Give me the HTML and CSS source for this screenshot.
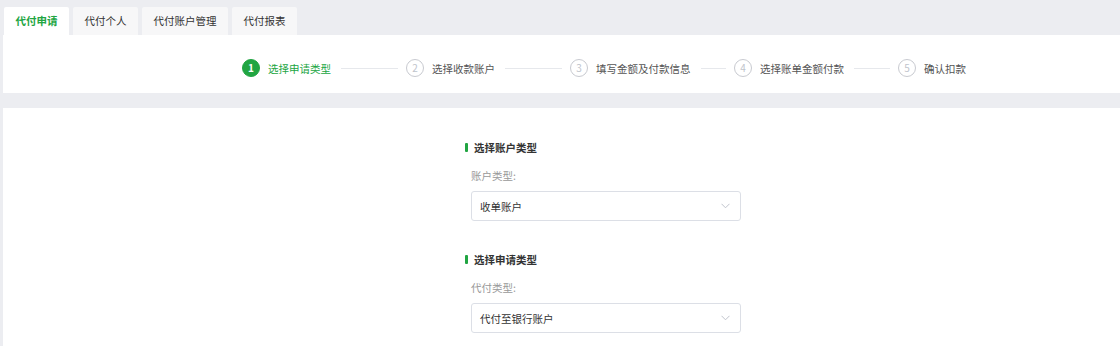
FILE: index.html
```html
<!DOCTYPE html>
<html lang="zh-CN">
<head>
<meta charset="utf-8">
<title>代付申请</title>
<link rel="stylesheet" href="styles.css">
</head>
<body>
<div class="tabs">
  <div class="tab active">代付申请</div>
  <div class="tab">代付个人</div>
  <div class="tab">代付账户管理</div>
  <div class="tab">代付报表</div>
</div>
<div class="panel steps-panel">
  <div class="steps">
    <div class="step done"><span class="num">1</span><span class="label">选择申请类型</span><span class="line"></span></div>
    <div class="step"><span class="num">2</span><span class="label">选择收款账户</span><span class="line"></span></div>
    <div class="step"><span class="num">3</span><span class="label">填写金额及付款信息</span><span class="line"></span></div>
    <div class="step"><span class="num">4</span><span class="label">选择账单金额付款</span><span class="line"></span></div>
    <div class="step last"><span class="num">5</span><span class="label">确认扣款</span></div>
  </div>
</div>
<div class="panel form-panel">
  <div class="form">
    <div class="section">
      <div class="sec-title">选择账户类型</div>
      <div class="field-label">账户类型:</div>
      <div class="select"><span>收单账户</span><svg class="chev" width="9" height="6" viewBox="0 0 9 6"><path d="M0.5 0.8 L4.5 4.8 L8.5 0.8" fill="none" stroke="#c0c4cc" stroke-width="1"/></svg></div>
    </div>
    <div class="section">
      <div class="sec-title">选择申请类型</div>
      <div class="field-label">代付类型:</div>
      <div class="select"><span>代付至银行账户</span><svg class="chev" width="9" height="6" viewBox="0 0 9 6"><path d="M0.5 0.8 L4.5 4.8 L8.5 0.8" fill="none" stroke="#c0c4cc" stroke-width="1"/></svg></div>
    </div>
  </div>
</div>
</body>
</html>
```
FILE: styles.css
```css
html, body {
  margin: 0;
  padding: 0;
  height: 100%;
}
body {
  background: #ecedf1;
  font-family: "Noto Sans CJK SC", "Noto Sans", sans-serif;
  font-size: 10.5px;
  color: #333;
  overflow: hidden;
}
.tabs {
  display: flex;
  gap: 4px;
  padding: 7px 0 0 4px;
}
.tab {
  height: 28px;
  line-height: 28px;
  padding: 0 11.5px;
  background: #f7f7f8;
  color: #333;
  border-radius: 2px 2px 0 0;
}
.tab.active {
  background: #fff;
  color: #21a542;
  font-weight: bold;
}
.panel {
  background: #fff;
  margin-left: 3px;
}
.steps-panel {
  height: 58px;
  box-sizing: border-box;
  padding: 24px 0 0 239px;
}
.steps {
  display: flex;
  align-items: center;
  height: 18px;
}
.step {
  display: flex;
  align-items: center;
  width: 164px;
  flex: none;
}
.step.last {
  width: auto;
}
.num {
  width: 18px;
  height: 18px;
  box-sizing: border-box;
  border: 1px solid #c8cad0;
  border-radius: 50%;
  color: #c0c4cc;
  font-size: 10px;
  line-height: 16px;
  text-align: center;
  flex: none;
}
.step.done .num {
  background: #21a542;
  border-color: #21a542;
  color: #fff;
  font-weight: bold;
}
.label {
  margin-left: 8px;
  color: #555;
  white-space: nowrap;
}
.step.done .label {
  color: #21a542;
}
.line {
  flex: 1;
  height: 1px;
  background: #e6e8ec;
  margin: 0 8px 0 10px;
}
.form-panel {
  margin-top: 15px;
  height: 238px;
  padding: 31px 0 0 462px;
  box-sizing: border-box;
}
.section + .section {
  margin-top: 30px;
}
.sec-title {
  display: flex;
  align-items: center;
  height: 16px;
  font-weight: bold;
  color: #333;
}
.sec-title::before {
  content: "";
  width: 3px;
  height: 9px;
  background: #21a542;
  border-radius: 1px;
  margin-right: 6px;
}
.field-label {
  margin: 13px 0 0 6px;
  height: 16px;
  line-height: 16px;
  color: #999;
}
.select {
  margin: 7px 0 0 6px;
  width: 270px;
  height: 30px;
  box-sizing: border-box;
  border: 1px solid #dcdfe6;
  border-radius: 3px;
  display: flex;
  align-items: center;
  justify-content: space-between;
  padding: 0 8px;
  color: #333;
}
.chev {
  margin-right: 2px;
}
```
